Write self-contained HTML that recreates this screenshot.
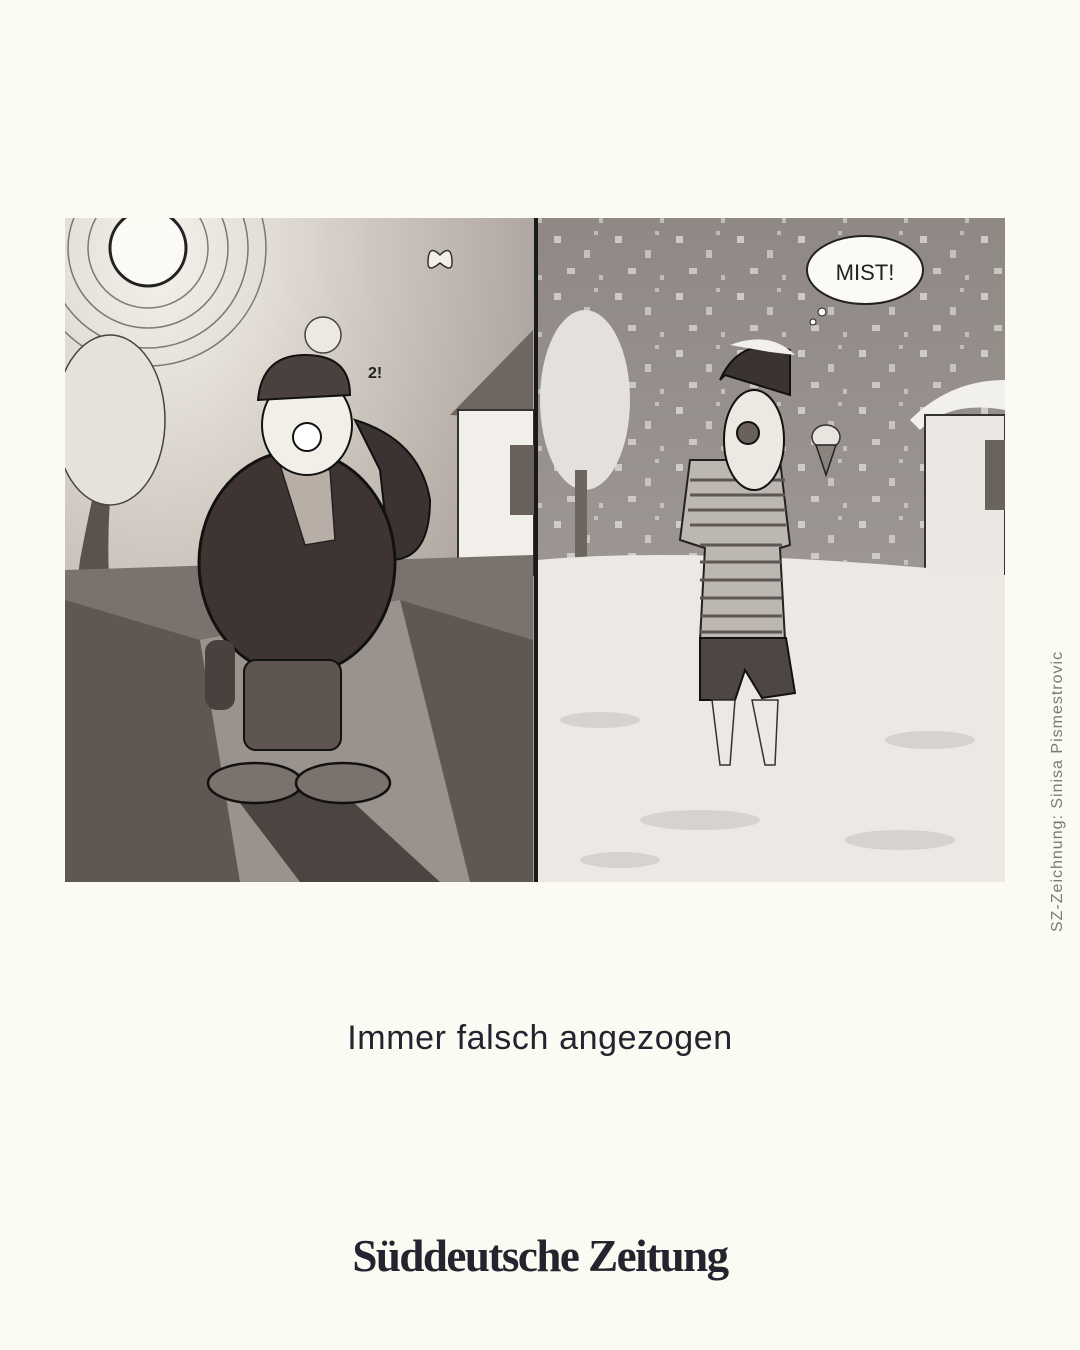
<!DOCTYPE html>
<html><head><meta charset="utf-8"><style>
html,body{margin:0;padding:0;}
body{width:1080px;height:1350px;background:#fbfaf3;position:relative;overflow:hidden;font-family:"Liberation Sans",sans-serif;}
.cap{position:absolute;left:0;width:1080px;top:1019px;text-align:center;font-size:34px;color:#24232e;letter-spacing:0.6px;}
.logo{position:absolute;left:0;width:1080px;top:1230px;text-align:center;font-family:"Liberation Serif",serif;font-weight:bold;font-size:45px;color:#24232e;letter-spacing:-1.5px;}
.credit{position:absolute;left:1049px;top:932px;transform-origin:0 0;transform:rotate(-90deg);font-size:16px;color:#7a7a7a;white-space:nowrap;letter-spacing:1px;}
</style></head><body>
<svg width="1080" height="1350" style="position:absolute;left:0;top:0">
<defs>
<clipPath id="lc"><rect x="65" y="218" width="469" height="664"/></clipPath>
<clipPath id="rc"><rect x="538" y="218" width="467" height="664"/></clipPath>
<radialGradient id="sky" cx="0.2" cy="0.05" r="0.9">
<stop offset="0" stop-color="#f6f3ec"/><stop offset="0.5" stop-color="#cfc8c0"/><stop offset="1" stop-color="#a69e97"/></radialGradient>
<linearGradient id="rsky" x1="0" y1="0" x2="0" y2="1"><stop offset="0" stop-color="#8f8884"/><stop offset="1" stop-color="#a8a29e"/></linearGradient>
<pattern id="snow" width="61" height="57" patternUnits="userSpaceOnUse">
<rect x="5" y="8" width="7" height="7" fill="#e8e5e0" opacity=".7"/><rect x="35" y="22" width="6" height="8" fill="#e8e5e0" opacity=".6"/>
<rect x="18" y="40" width="8" height="6" fill="#e8e5e0" opacity=".65"/><rect x="50" y="47" width="4" height="5" fill="#f0eee9" opacity=".5"/>
<rect x="45" y="3" width="4" height="4" fill="#f0eee9" opacity=".5"/></pattern>
</defs>
<g clip-path="url(#lc)">
<rect x="65" y="218" width="469" height="664" fill="url(#sky)"/>
<g fill="none" stroke="#333" stroke-width="1.5" opacity=".6">
<circle cx="148" cy="248" r="60"/><circle cx="148" cy="248" r="80"/><circle cx="148" cy="248" r="100"/><circle cx="148" cy="248" r="118"/></g>
<circle cx="148" cy="248" r="38" fill="#fbfaf5" stroke="#222" stroke-width="3"/>
<path d="M80 560 Q95 480 105 450 L115 455 Q105 520 110 600 L75 600Z" fill="#5b524d"/>
<ellipse cx="110" cy="420" rx="55" ry="85" fill="#e6e1da" stroke="#444" stroke-width="1.5"/>
<polygon points="450,415 533,330 533,420" fill="#6f6661"/>
<rect x="458" y="410" width="76" height="165" fill="#f2efea" stroke="#333" stroke-width="2"/>
<rect x="510" y="445" width="24" height="70" fill="#6a615c"/>
<path d="M65 570 L533 555 L533 882 L65 882Z" fill="#7a726c"/>
<path d="M65 600 L200 640 L240 882 L65 882Z" fill="#5f5752"/>
<path d="M400 600 L533 640 L533 882 L470 882Z" fill="#5f5752"/>
<path d="M200 640 L400 600 L470 882 L240 882Z" fill="#9a928c"/>
<path d="M230 790 L340 790 L440 882 L300 882Z" fill="#4b4440"/>
<path d="M355 420 Q420 440 430 500 Q430 560 390 560 L380 470Z" fill="#3b3331" stroke="#111" stroke-width="2"/>
<ellipse cx="297" cy="563" rx="98" ry="112" fill="#3e3533" stroke="#111" stroke-width="3"/>
<rect x="244" y="660" width="97" height="90" rx="12" fill="#5e5450" stroke="#111" stroke-width="2"/>
<rect x="205" y="640" width="30" height="70" rx="12" fill="#4a403d"/>
<ellipse cx="255" cy="783" rx="47" ry="20" fill="#7b726d" stroke="#111" stroke-width="2.5"/>
<ellipse cx="343" cy="783" rx="47" ry="20" fill="#7b726d" stroke="#111" stroke-width="2.5"/>
<path d="M280 465 L330 470 L335 540 L305 545Z" fill="#b8aea6" stroke="#222" stroke-width="1.5"/>
<ellipse cx="307" cy="425" rx="45" ry="50" fill="#f2eee8" stroke="#111" stroke-width="2"/>
<ellipse cx="307" cy="437" rx="14" ry="14" fill="#fff" stroke="#111" stroke-width="2"/>
<path d="M258 400 Q262 355 305 355 Q350 355 350 395 Z" fill="#4a403e" stroke="#111" stroke-width="2"/>
<circle cx="323" cy="335" r="18" fill="#ede9e2" stroke="#444" stroke-width="1.5"/>
<text x="368" y="378" font-family="Liberation Sans,sans-serif" font-size="16" font-weight="bold" fill="#222">2!</text>
<path d="M440 255 q-12 -12 -12 8 q0 10 12 0 q12 10 12 0 q0 -20 -12 -8z" fill="#f3efe8" stroke="#333" stroke-width="1.5"/>
</g>
<rect x="534" y="218" width="4" height="664" fill="#1a1a1a"/>
<g clip-path="url(#rc)">
<rect x="538" y="218" width="467" height="664" fill="url(#rsky)"/>
<rect x="538" y="218" width="467" height="360" fill="url(#snow)"/>
<ellipse cx="585" cy="400" rx="45" ry="90" fill="#e4e1dc"/>
<rect x="575" y="470" width="12" height="100" fill="#6d6560"/>
<path d="M910 420 Q950 380 1005 380 L1005 410 Q950 400 920 430Z" fill="#f2f0ec"/>
<rect x="925" y="415" width="80" height="172" fill="#ebe8e3" stroke="#333" stroke-width="2"/>
<rect x="985" y="440" width="20" height="70" fill="#6a625d"/>
<path d="M538 560 Q700 545 1005 575 L1005 882 L538 882Z" fill="#ece9e5"/>
<g fill="#d6d2cd"><ellipse cx="600" cy="720" rx="40" ry="8"/><ellipse cx="930" cy="740" rx="45" ry="9"/><ellipse cx="700" cy="820" rx="60" ry="10"/><ellipse cx="900" cy="840" rx="55" ry="10"/><ellipse cx="620" cy="860" rx="40" ry="8"/></g>
<path d="M690 460 L780 460 L790 545 L780 548 L785 640 L700 640 L705 548 L680 540Z" fill="#bdb7b2" stroke="#222" stroke-width="2"/>
<g stroke="#5e5652" stroke-width="3"><line x1="690" y1="480" x2="785" y2="480"/><line x1="690" y1="495" x2="785" y2="495"/><line x1="688" y1="510" x2="786" y2="510"/><line x1="690" y1="525" x2="786" y2="525"/><line x1="700" y1="545" x2="782" y2="545"/><line x1="700" y1="562" x2="782" y2="562"/><line x1="700" y1="580" x2="782" y2="580"/><line x1="700" y1="598" x2="782" y2="598"/><line x1="700" y1="616" x2="782" y2="616"/><line x1="700" y1="632" x2="782" y2="632"/></g>
<path d="M700 638 L786 638 L795 693 L762 698 L745 670 L735 700 L700 700Z" fill="#4e4644" stroke="#111" stroke-width="2"/>
<path d="M712 700 L720 765 L730 765 L735 700Z M752 700 L765 765 L775 765 L778 700Z" fill="#ece8e3" stroke="#333" stroke-width="1.5"/>
<ellipse cx="754" cy="440" rx="30" ry="50" fill="#ece8e2" stroke="#111" stroke-width="2"/>
<circle cx="748" cy="433" r="11" fill="#6a605c" stroke="#111" stroke-width="2"/>
<path d="M720 380 Q740 335 790 350 L790 395 L725 375Z" fill="#3b3331" stroke="#111" stroke-width="2"/>
<path d="M730 345 Q770 330 795 355 L770 352Z" fill="#f2f0ec"/>
<ellipse cx="826" cy="437" rx="14" ry="12" fill="#e8e4de" stroke="#333" stroke-width="1.5"/>
<path d="M816 445 L826 475 L836 445Z" fill="#8a827d" stroke="#222" stroke-width="1.5"/>
<ellipse cx="865" cy="270" rx="58" ry="34" fill="#fbfaf6" stroke="#222" stroke-width="2"/>
<circle cx="822" cy="312" r="4" fill="#fbfaf6" stroke="#222"/><circle cx="813" cy="322" r="3" fill="#fbfaf6" stroke="#222"/>
<text x="865" y="280" text-anchor="middle" font-family="Liberation Sans,sans-serif" font-size="22" fill="#222">MIST!</text>
</g>
</svg>
<div class="cap">Immer falsch angezogen</div>
<div class="logo">Süddeutsche Zeitung</div>
<div class="credit">SZ-Zeichnung: Sinisa Pismestrovic</div>
</body></html>
